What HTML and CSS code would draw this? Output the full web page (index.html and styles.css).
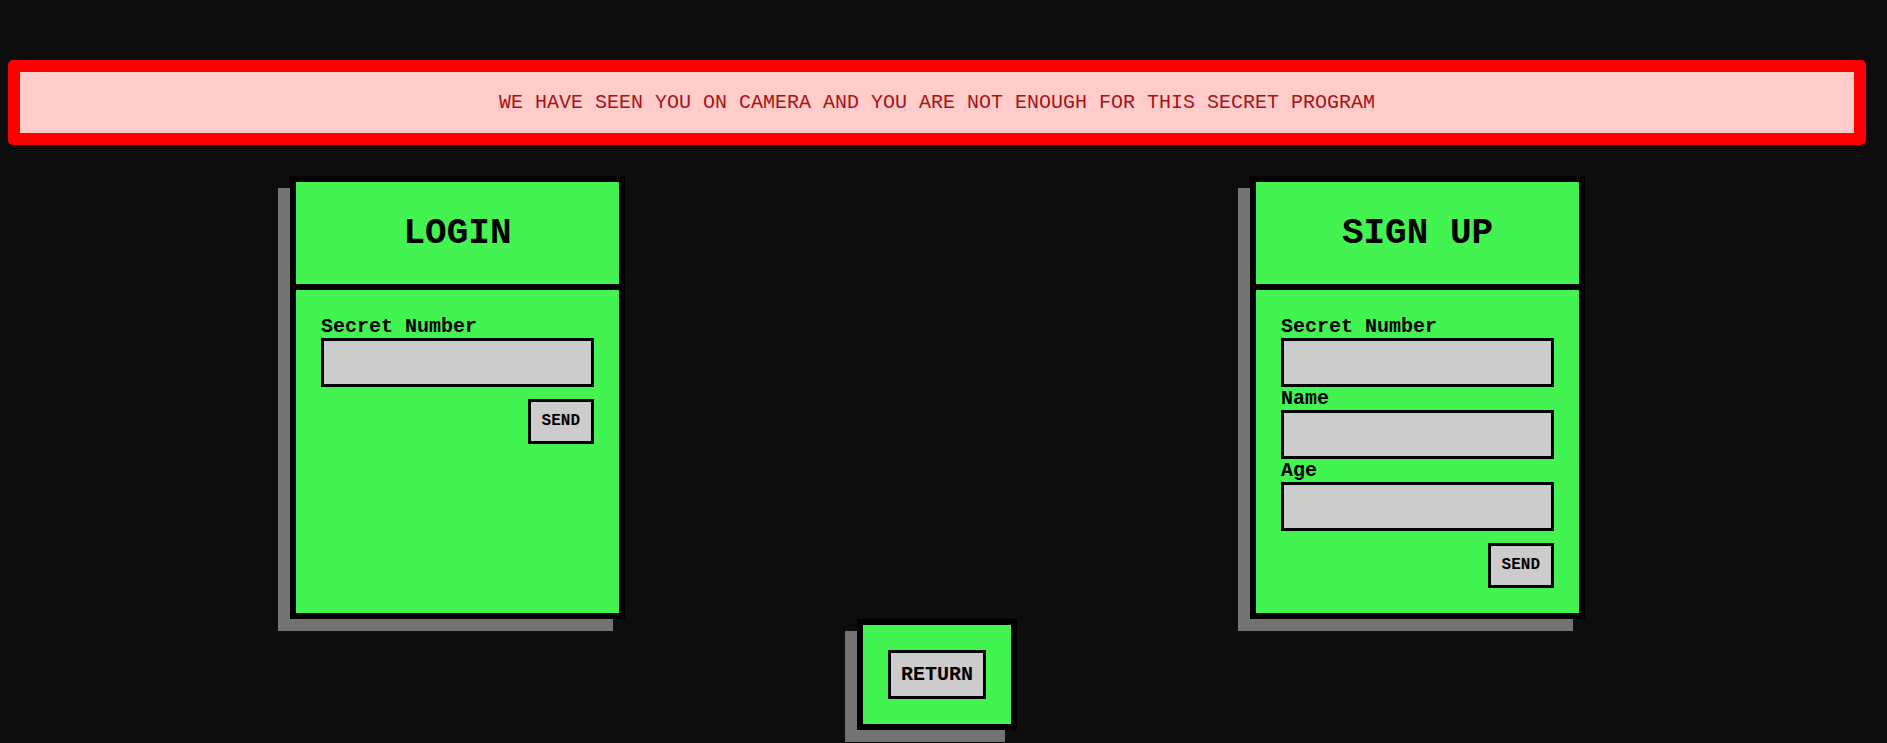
FILE: index.html
```html
<!DOCTYPE html>
<html lang="en">
<head>
<meta charset="utf-8">
<title>Secret Program</title>
<link rel="stylesheet" href="styles.css">
</head>
<body>
<div class="page">
  <div class="alert">WE HAVE SEEN YOU ON CAMERA AND YOU ARE NOT ENOUGH FOR THIS SECRET PROGRAM</div>
  <div class="cards">
    <div class="card">
      <div class="card-head">LOGIN</div>
      <form class="card-body">
        <label class="field-label">Secret Number</label>
        <input class="field" type="text">
        <div class="actions"><button type="button" class="btn btn-small">SEND</button></div>
      </form>
    </div>
    <div class="card">
      <div class="card-head">SIGN UP</div>
      <form class="card-body">
        <label class="field-label">Secret Number</label>
        <input class="field" type="text">
        <label class="field-label">Name</label>
        <input class="field" type="text">
        <label class="field-label">Age</label>
        <input class="field" type="text">
        <div class="actions"><button type="button" class="btn btn-small">SEND</button></div>
      </form>
    </div>
  </div>
  <div class="return-row">
    <div class="return-card">
      <button type="button" class="btn btn-large">RETURN</button>
    </div>
  </div>
</div>
</body>
</html>
```
FILE: styles.css
```css
* { box-sizing: border-box; }
html, body {
  margin: 0;
  background: #0d0d0d;
  font-family: "Liberation Mono", "Courier New", monospace;
  color: #000;
}
.page {
  padding: 60px 21px 0 8px;
  height: 743px;
  overflow: hidden;
}
.alert {
  border: 12px solid #ff0000;
  border-radius: 5px;
  background: #ffcccc;
  color: #aa1111;
  font-size: 20px;
  height: 85px;
  line-height: 61px;
  text-align: center;
}
.cards {
  display: flex;
  justify-content: space-between;
  margin-top: 31px;
  padding: 0 281px 0 282px;
}
.card {
  width: 335px;
  border: 6px solid #000;
  background: #43f352;
  box-shadow: -12px 12px 0 #737373;
  display: flex;
  flex-direction: column;
}
.card-head {
  height: 108px;
  border-bottom: 6px solid #000;
  display: flex;
  align-items: center;
  justify-content: center;
  font-size: 36px;
  font-weight: bold;
}
.card-body {
  margin: 0;
  padding: 25px;
  display: flex;
  flex-direction: column;
}
.field-label {
  font-size: 20px;
  font-weight: bold;
  line-height: 23px;
  height: 23px;
}
.field {
  width: 100%;
  height: 49px;
  border: 3px solid #000;
  background: #cccccc;
  margin: 0;
  padding: 0 6px;
  font: inherit;
  border-radius: 0;
  outline: none;
}
.actions {
  display: flex;
  justify-content: flex-end;
  margin-top: 12px;
}
.btn {
  font-family: "Liberation Mono", "Courier New", monospace;
  font-weight: bold;
  background: #cccccc;
  border: 3px solid #000;
  border-radius: 0;
  color: #000;
  margin: 0;
  cursor: pointer;
}
.btn-small {
  font-size: 16px;
  line-height: 19px;
  padding: 10px 11px;
}
.btn-large {
  font-size: 20px;
  line-height: 23px;
  padding: 10px 10px;
}
.return-row {
  display: flex;
  justify-content: center;
}
.return-card {
  border: 6px solid #000;
  background: #43f352;
  box-shadow: -12px 12px 0 #737373;
  padding: 25px;
}
```
